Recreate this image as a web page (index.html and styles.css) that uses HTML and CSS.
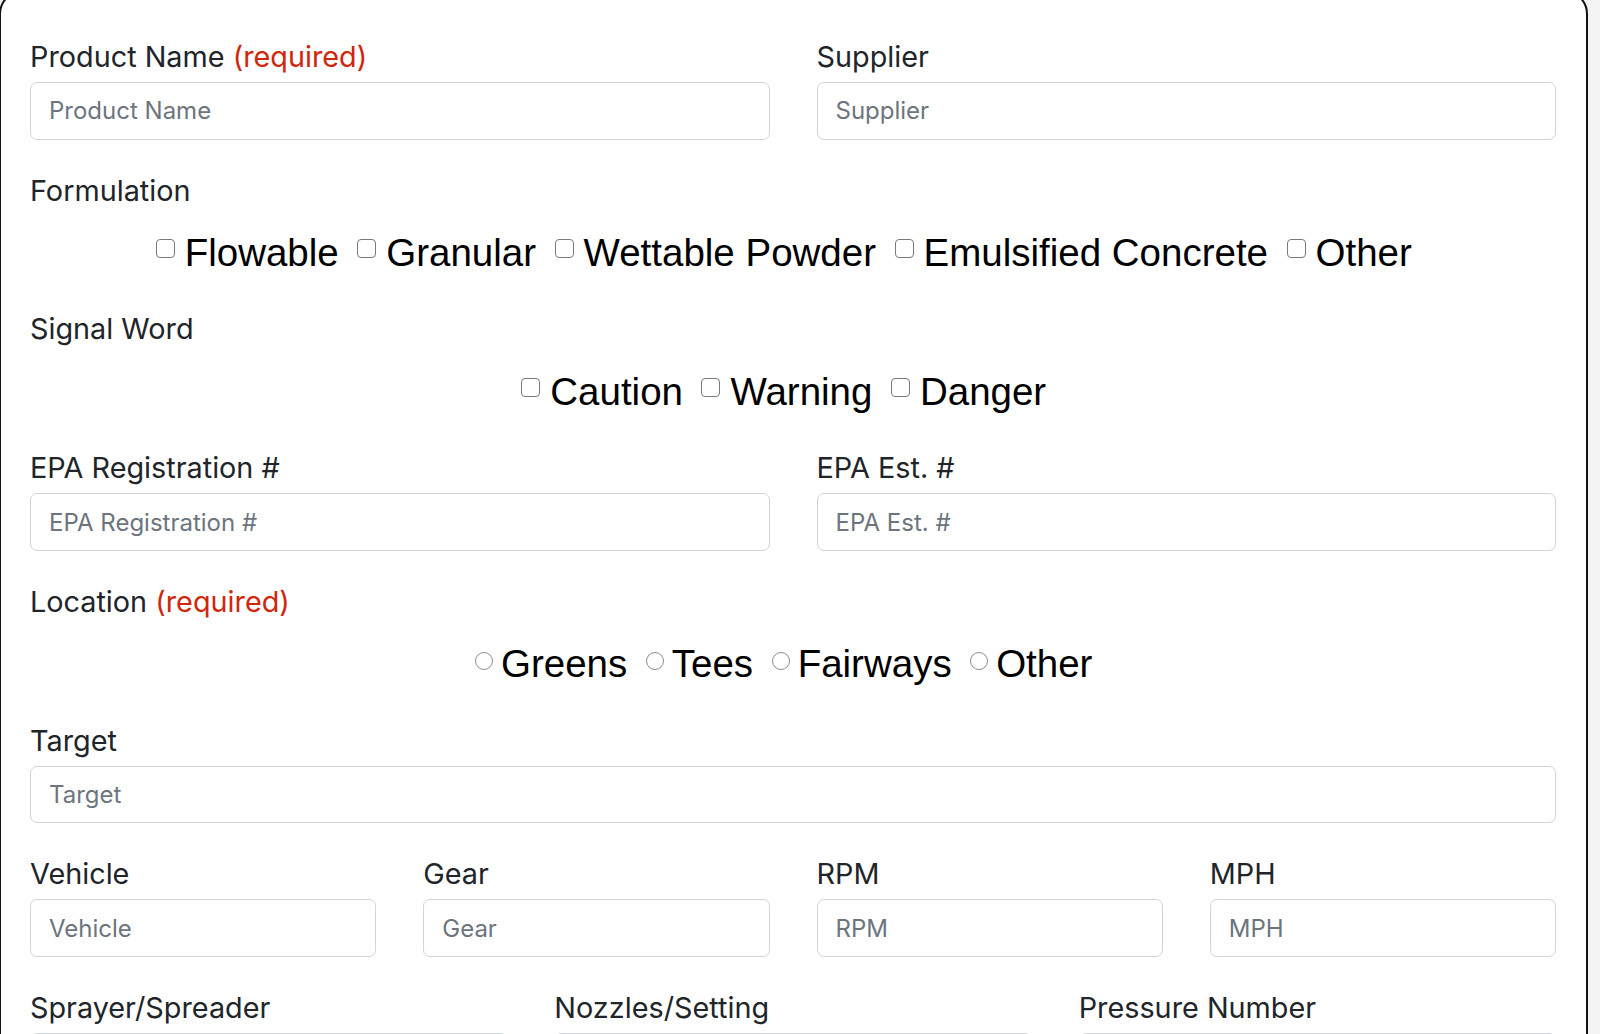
FILE: index.html
```html
<!DOCTYPE html>
<html lang="en">
<head>
<meta charset="utf-8">
<title>Product Form</title>
<link rel="stylesheet" href="styles.css">
</head>
<body>
<div class="card">
  <form class="form">
    <div class="section fields grid cols-2">
      <div class="field">
        <label class="label">Product Name <span class="req">(required)</span></label>
        <input class="control" type="text" placeholder="Product Name">
      </div>
      <div class="field">
        <label class="label">Supplier</label>
        <input class="control" type="text" placeholder="Supplier">
      </div>
    </div>

    <div class="section choice">
      <div class="label">Formulation</div>
      <div class="options">
        <label class="opt"><input class="box" type="checkbox">Flowable</label>
        <label class="opt"><input class="box" type="checkbox">Granular</label>
        <label class="opt"><input class="box" type="checkbox">Wettable Powder</label>
        <label class="opt"><input class="box" type="checkbox">Emulsified Concrete</label>
        <label class="opt"><input class="box" type="checkbox">Other</label>
      </div>
    </div>

    <div class="section choice">
      <div class="label">Signal Word</div>
      <div class="options">
        <label class="opt"><input class="box" type="checkbox">Caution</label>
        <label class="opt"><input class="box" type="checkbox">Warning</label>
        <label class="opt"><input class="box" type="checkbox">Danger</label>
      </div>
    </div>

    <div class="section fields grid cols-2">
      <div class="field">
        <label class="label">EPA Registration #</label>
        <input class="control" type="text" placeholder="EPA Registration #">
      </div>
      <div class="field">
        <label class="label">EPA Est. #</label>
        <input class="control" type="text" placeholder="EPA Est. #">
      </div>
    </div>

    <div class="section choice">
      <div class="label">Location <span class="req">(required)</span></div>
      <div class="options">
        <label class="opt"><input class="box round" type="radio" name="loc">Greens</label>
        <label class="opt"><input class="box round" type="radio" name="loc">Tees</label>
        <label class="opt"><input class="box round" type="radio" name="loc">Fairways</label>
        <label class="opt"><input class="box round" type="radio" name="loc">Other</label>
      </div>
    </div>

    <div class="section fields">
      <div class="field">
        <label class="label">Target</label>
        <input class="control" type="text" placeholder="Target">
      </div>
    </div>

    <div class="section fields grid cols-4">
      <div class="field">
        <label class="label">Vehicle</label>
        <input class="control" type="text" placeholder="Vehicle">
      </div>
      <div class="field">
        <label class="label">Gear</label>
        <input class="control" type="text" placeholder="Gear">
      </div>
      <div class="field">
        <label class="label">RPM</label>
        <input class="control" type="text" placeholder="RPM">
      </div>
      <div class="field">
        <label class="label">MPH</label>
        <input class="control" type="text" placeholder="MPH">
      </div>
    </div>

    <div class="section fields grid cols-3">
      <div class="field">
        <label class="label">Sprayer/Spreader</label>
        <input class="control" type="text" placeholder="Sprayer/Spreader">
      </div>
      <div class="field">
        <label class="label">Nozzles/Setting</label>
        <input class="control" type="text" placeholder="Nozzles/Setting">
      </div>
      <div class="field">
        <label class="label">Pressure Number</label>
        <input class="control" type="text" placeholder="Pressure Number">
      </div>
    </div>
  </form>
</div>
</body>
</html>
```

FILE: styles.css
```css
html, body {
  margin: 0;
  padding: 0;
  overflow: hidden;
  background: #f3f3f3;
}

.card {
  box-sizing: border-box;
  width: 1589px;
  margin: -10px 0 0 -1px;
  background: #ffffff;
  border: 2px solid #111111;
  border-radius: 24px;
}

.form {
  display: flex;
  flex-direction: column;
  padding: 45px 30px 60px 29px;
}

.section.fields {
  margin-bottom: 31px;
}

.section.choice {
  margin-bottom: 34.6px;
}

.grid {
  display: grid;
  column-gap: 47px;
}

.cols-2 { grid-template-columns: 1fr 1fr; }
.cols-3 { grid-template-columns: 1fr 1fr 1fr; }
.cols-4 { grid-template-columns: 1fr 1fr 1fr 1fr; }

.field {
  display: flex;
  flex-direction: column;
  min-width: 0;
}

.label {
  display: block;
  font-family: "Inter", "Noto Sans", sans-serif;
  font-size: 28.8px;
  line-height: 40px;
  color: #212529;
  margin-bottom: 5px;
}

.choice .label {
  margin-bottom: 0;
}

.req {
  color: #d0260c;
}

.control {
  box-sizing: border-box;
  width: 100%;
  height: 57.5px;
  margin: 0;
  padding: 0 18px;
  font-family: "Inter", "Noto Sans", sans-serif;
  font-size: 24px;
  color: #212529;
  background: #ffffff;
  border: 1px solid #ced4da;
  border-radius: 7px;
  outline: none;
}

.control::placeholder {
  color: #6c757d;
}

.options {
  display: flex;
  justify-content: center;
  margin-top: 20.4px;
  font-family: "Liberation Sans", Arial, sans-serif;
  font-size: 38.5px;
  line-height: 44px;
  color: #000000;
}

.opt {
  display: flex;
  align-items: flex-start;
  margin-right: 18.5px;
  white-space: nowrap;
}

.box {
  appearance: none;
  -webkit-appearance: none;
  box-sizing: border-box;
  flex: none;
  width: 19px;
  height: 19px;
  margin: 8.5px 10px 0 0;
  background: #ffffff;
  border: 1.5px solid #7a7a7a;
  border-radius: 4px;
}

.box.round {
  width: 18px;
  height: 18px;
  margin: 10px 8px 0 0;
  border-radius: 50%;
  border-color: #8c8c8c;
}
```
